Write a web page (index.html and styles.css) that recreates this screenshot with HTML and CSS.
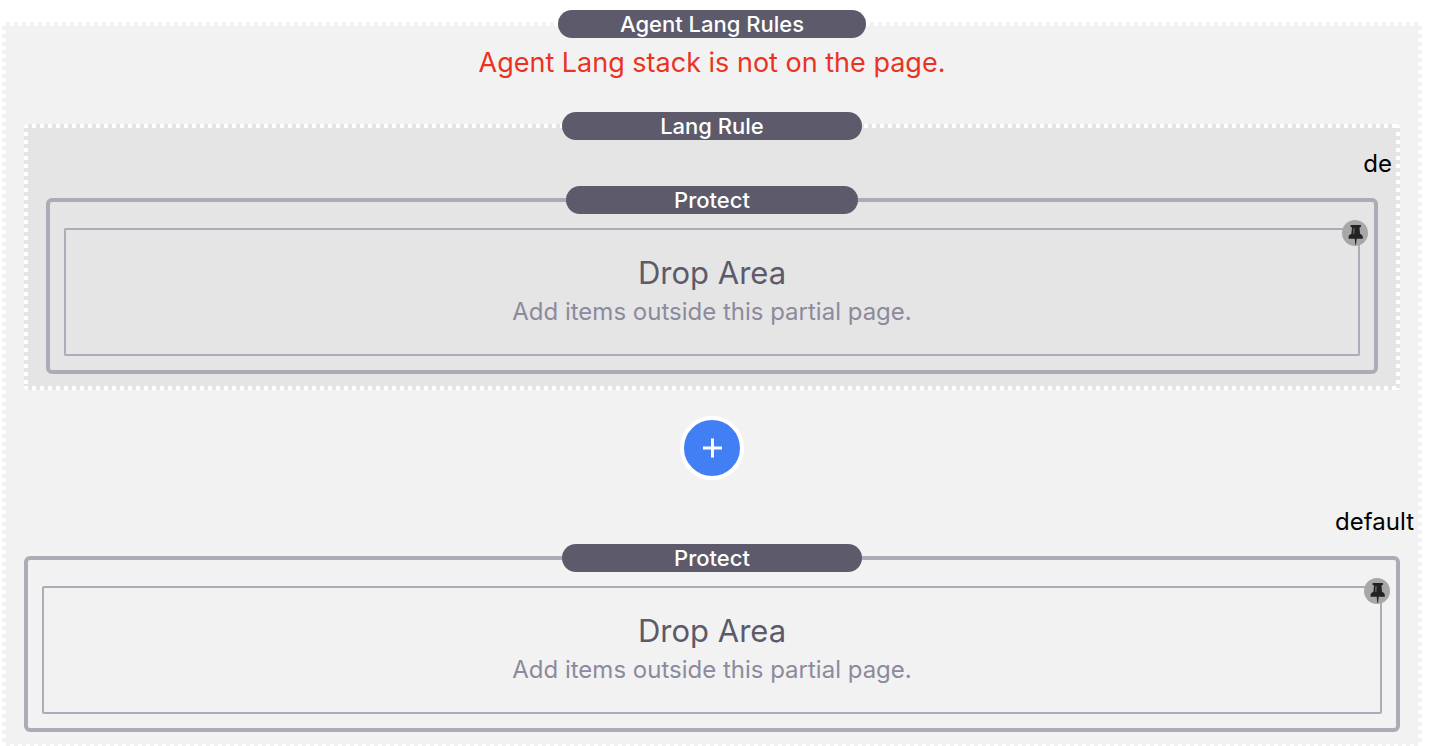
FILE: index.html
```html
<!DOCTYPE html>
<html lang="en">
<head>
  <meta charset="UTF-8">
  <meta name="viewport" content="width=device-width, initial-scale=1.0">
  <title>Agent Lang Rules</title>
  <link rel="stylesheet" href="styles.css">
</head>
<body>
  <svg class="sprite" aria-hidden="true">
    <symbol id="pin" viewBox="0 0 26 26">
      <path d="M9 5h9.500q.5 0 .5.500v1q0 .5-1.500 1.100l.5 6.200c1.600.8 2.800 1.700 2.800 3.400v1.500h-6.100l-.7 6h-.7l-.6-6H6.600v-1.500c0-1.700 1.200-2.600 2.800-3.400l.6-6.200q-1.500-.6-1.500-1.100v-1q0-.5.5-.5z" fill="#222"/>
      <path d="M11.300 8h1.500l-.2 5.800h-1.700z" fill="#5c5c5c"/>
    </symbol>
  </svg>

  <main class="stack rules">
    <h1 class="badge">Agent Lang Rules</h1>
    <p class="error">Agent Lang stack is not on the page.</p>

    <section class="stack rule">
      <h2 class="badge">Lang Rule</h2>
      <div class="lang">de</div>
      <div class="protect">
        <h3 class="badge">Protect</h3>
        <div class="drop">
          <button type="button" class="pin" aria-label="Pin"><svg><use href="#pin"/></svg></button>
          <div class="drop-title">Drop Area</div>
          <div class="drop-text">Add items outside this partial page.</div>
        </div>
      </div>
    </section>

    <button type="button" class="add" aria-label="Add rule">
      <svg viewBox="0 0 20 20"><path d="M10.500 .5v19M1 10h19" stroke="#fff" stroke-width="3"/></svg>
    </button>

    <div class="lang">default</div>
    <div class="protect">
      <h3 class="badge">Protect</h3>
      <div class="drop">
        <button type="button" class="pin" aria-label="Pin"><svg><use href="#pin"/></svg></button>
        <div class="drop-title">Drop Area</div>
        <div class="drop-text">Add items outside this partial page.</div>
      </div>
    </div>
  </main>
</body>
</html>
```
FILE: styles.css
```css
* {
  box-sizing: border-box;
}
html {
  overflow-x: hidden;
  scrollbar-width: none;
}
body {
  margin: 0;
  padding: 22px 14px 0 2px;
  background: #fff;
  color: #000;
  font-family: Inter, "Liberation Sans", sans-serif;
}
h1, h2, h3, p {
  margin: 0;
}
.sprite {
  display: none;
}

/* square dots on all four edges */
.stack {
  --dots-x: repeating-linear-gradient(90deg, #fff 0 4px, transparent 4px 8px);
  --dots-y: repeating-linear-gradient(#fff 0 4px, transparent 4px 8px);
  position: relative;
  display: flex;
  flex-direction: column;
  border: 4px solid transparent;
  border-radius: 4px;
  padding-bottom: 12px;
  background-image: var(--dots-x), var(--dots-x), var(--dots-y), var(--dots-y);
  background-position: top, bottom, left, right;
  background-size: 100% 4px, 100% 4px, 4px 100%, 4px 100%;
  background-repeat: no-repeat;
  background-origin: border-box;
}
.rules {
  background-color: #f2f2f2;
}
.rule {
  margin: 0 18px 26px;
  padding-top: 22px;
  background-color: #e5e5e5;
}

.badge {
  position: absolute;
  top: -16px;
  left: 0;
  right: 0;
  width: calc(18% + 54px);
  margin: 0 auto;
  border-radius: 14px;
  background: #5c5a6b;
  color: #fff;
  font-size: 22px;
  font-weight: 500;
  line-height: 28px;
  text-align: center;
  white-space: nowrap;
}
.error {
  margin: 19px 0 43px;
  color: #eb3323;
  font-size: 27px;
  line-height: 36px;
  text-align: center;
}
.lang {
  margin-bottom: 20px;
  padding: 0 4px;
  font-size: 24px;
  line-height: 28px;
  text-align: right;
}

.protect {
  position: relative;
  margin: 0 18px;
  padding: 26px 14px 14px;
  border: 4px solid #acabb7;
  border-radius: 6px;
}
.drop {
  position: relative;
  padding: 23px 16px;
  border: 2px solid #acabb7;
  border-radius: 2px;
  text-align: center;
}
.drop-title {
  color: #5c5a6b;
  font-size: 31px;
  line-height: 40px;
}
.drop-text {
  color: #8c8a9d;
  font-size: 24px;
  line-height: 38px;
}

.pin {
  position: absolute;
  top: -10px;
  right: -10px;
  width: 26px;
  height: 26px;
  padding: 0;
  border: 0;
  border-radius: 50%;
  background: #a7a7a7;
  cursor: pointer;
}
.pin svg {
  display: block;
  width: 26px;
  height: 26px;
}
.add {
  display: flex;
  align-items: center;
  justify-content: center;
  align-self: center;
  width: 64px;
  height: 64px;
  margin-bottom: 28px;
  padding: 0;
  border: 4px solid #fff;
  border-radius: 50%;
  background: #427ff4;
  cursor: pointer;
}
.add svg {
  width: 20px;
  height: 20px;
}
```
